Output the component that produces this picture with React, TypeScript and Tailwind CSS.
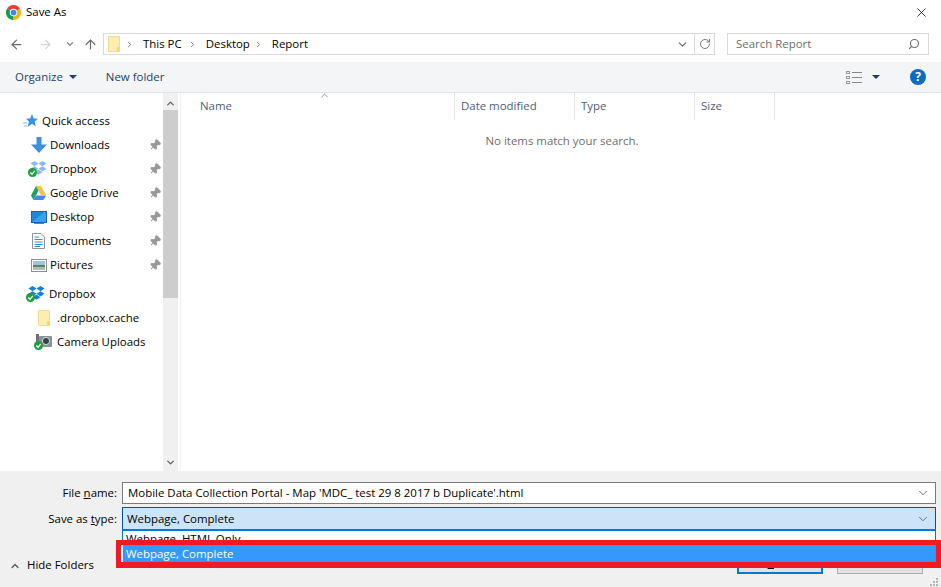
import { ArrowLeft, ArrowRight, ArrowUp, ChevronDown, ChevronRight, ChevronUp, Pin, RotateCw, Search, X } from "lucide-react";

const font = "font-['Open_Sans','Noto_Sans',sans-serif]";

function Chrome() {
  return (
    <svg width="15" height="15" viewBox="0 0 24 24">
      <path d="M12 12 L22.4 6 A12 12 0 0 0 1.6 6 Z" fill="#db4437" />
      <path d="M12 12 L1.6 6 A12 12 0 0 0 12 24 Z" fill="#0f9d58" />
      <path d="M12 12 L12 24 A12 12 0 0 0 22.4 6 Z" fill="#f4b400" />
      <circle cx="12" cy="12" r="6" fill="#fff" />
      <circle cx="12" cy="12" r="4.6" fill="#4285f4" />
    </svg>
  );
}

function Folder() {
  return (
    <svg width="12" height="16" viewBox="0 0 12 16">
      <path d="M0.5 0.5 H11.5 V15.5 H0.5 Z" fill="#fdeeb0" stroke="#efdc9a" />
      <path d="M9 15.5 V11 H11.5 V15.5 Z" fill="#f7d774" />
    </svg>
  );
}

function Check() {
  return (
    <svg className="absolute -left-0.5 bottom-0" width="9" height="9" viewBox="0 0 10 10">
      <circle cx="5" cy="5" r="5" fill="#1f9d3f" />
      <path d="M2.5 5 L4.5 7 L7.5 3.2" fill="none" stroke="#fff" strokeWidth="1.4" />
    </svg>
  );
}

function DropboxIcon({ color }: { color: string }) {
  return (
    <span className="relative block w-[17px] h-[16px]">
      <svg width="17" height="15" viewBox="0 0 17 15">
        <path d="M4.5 0 L8.5 2.6 L4.5 5.2 L0.5 2.6 Z M12.5 0 L16.5 2.6 L12.5 5.2 L8.5 2.6 Z M4.5 5.2 L8.5 7.8 L4.5 10.4 L0.5 7.8 Z M12.5 5.2 L16.5 7.8 L12.5 10.4 L8.5 7.8 Z M8.5 8.6 L12.5 11.2 L8.5 13.8 L4.5 11.2 Z" fill={color} />
      </svg>
      <Check />
    </span>
  );
}

function DownloadIcon() {
  return (
    <svg width="16" height="16" viewBox="0 0 16 16">
      <path d="M5.5 0 H10.5 V7.5 H16 L8 16 L0 7.5 H5.5 Z" fill="#3f8fdc" />
    </svg>
  );
}

function DriveIcon() {
  return (
    <svg width="15" height="14" viewBox="0 0 15 14">
      <path d="M5 0 H10 L15 9 H10 Z" fill="#f7c531" />
      <path d="M5 0 L7.5 4.5 L2.5 14 L0 9.5 Z" fill="#1fa463" />
      <path d="M5 9.5 H15 L12.5 14 H2.5 Z" fill="#4688f4" />
    </svg>
  );
}

function DesktopIcon() {
  return (
    <svg width="16" height="13" viewBox="0 0 16 13">
      <rect x="0.5" y="0.5" width="15" height="11" fill="#1d86e0" stroke="#1465b5" />
      <path d="M1 11 L13 1 H15 V11 Z" fill="#3aa0f0" />
      <rect x="3" y="12" width="10" height="1" fill="#6b7f90" />
    </svg>
  );
}

function DocIcon() {
  return (
    <svg width="13" height="16" viewBox="0 0 13 16">
      <path d="M0.5 0.5 H9 L12.5 4 V15.5 H0.5 Z" fill="#fff" stroke="#8a97a3" />
      <path d="M2.5 4 H7 M2.5 6.5 H10.5 M2.5 9 H10.5 M2.5 11.5 H10.5 M2.5 13.5 H8" stroke="#2f8fd8" strokeWidth="1" />
    </svg>
  );
}

function PictureIcon() {
  return (
    <svg width="16" height="13" viewBox="0 0 16 13">
      <rect x="0.5" y="0.5" width="15" height="12" fill="#fff" stroke="#8a8f94" />
      <rect x="2" y="2" width="12" height="4" fill="#9fc6d8" />
      <rect x="2" y="6" width="12" height="2" fill="#5f7f6e" />
      <rect x="2" y="8" width="12" height="3" fill="#a7c0b5" />
    </svg>
  );
}

function StarIcon() {
  return (
    <svg width="15" height="14" viewBox="0 0 15 14">
      <path d="M9 0 L10.6 4.4 L15 4.7 L11.6 7.6 L12.8 12.5 L9 9.8 L4.6 13 L6 7.6 L3 4.7 L7.2 4.4 Z" fill="#2f93e6" />
      <path d="M0 9 H4 M1 12 H4" stroke="#7fbdea" />
    </svg>
  );
}

function CameraIcon() {
  return (
    <span className="relative block w-[16px] h-[16px]">
      <svg width="16" height="14" viewBox="0 0 16 14">
        <rect x="0" y="0" width="3" height="13" fill="#6a6f73" />
        <rect x="3" y="2" width="13" height="11" rx="1" fill="#8d9296" />
        <circle cx="10" cy="7" r="3.6" fill="#34424c" stroke="#d6dadd" />
      </svg>
      <Check />
    </span>
  );
}

function Grip() {
  return (
    <svg className="absolute right-[3px] bottom-[1px]" width="8" height="8" viewBox="0 0 8 8" fill="#b5b5b5">
      <rect x="6" y="0" width="2" height="2" />
      <rect x="3" y="3" width="2" height="2" />
      <rect x="6" y="3" width="2" height="2" />
      <rect x="0" y="6" width="2" height="2" />
      <rect x="3" y="6" width="2" height="2" />
      <rect x="6" y="6" width="2" height="2" />
    </svg>
  );
}

const quick = [
  { name: "Downloads", icon: <DownloadIcon /> },
  { name: "Dropbox", icon: <DropboxIcon color="#8fb9e6" /> },
  { name: "Google Drive", icon: <DriveIcon /> },
  { name: "Desktop", icon: <DesktopIcon /> },
  { name: "Documents", icon: <DocIcon /> },
  { name: "Pictures", icon: <PictureIcon /> },
];

function NavRow({ icon, name }: { icon: React.ReactNode; name: string }) {
  return (
    <div className="flex items-center h-6 pl-[29px] pr-[2px] text-black">
      <span className="w-[21px] flex justify-center shrink-0 -ml-px mr-px">{icon}</span>
      <span className="flex-1 truncate">{name}</span>
      <Pin size={12} className="text-[#999] fill-[#999] rotate-45" />
    </div>
  );
}

function Column({ label, width }: { label: string; width: string }) {
  return (
    <div className={`${width} h-[26px] flex items-center pl-1.5 border-r border-[#e5e5e5] text-[#4c607a]`}>{label}</div>
  );
}

function Crumb({ label, gap }: { label: string; gap: string }) {
  return (
    <>
      <ChevronRight size={9} strokeWidth={2.5} className={`${gap} text-[#777] shrink-0`} />
      <span className="ml-[9px]">{label}</span>
    </>
  );
}

export default function App() {
  return (
    <div className={`${font} relative w-[941px] h-[587px] overflow-hidden bg-white text-[11.45px] leading-4 text-black flex flex-col`}>
      <header className="h-[24px] shrink-0 flex items-center pl-1.5 pr-[12px]">
        <Chrome />
        <span className="ml-[5px] flex-1">Save As</span>
        <X size={15} strokeWidth={1.2} />
      </header>

      <nav className="h-[38px] shrink-0 flex items-start pt-[9px]">
        <div className="flex items-center h-[22px] pl-[9px] w-[103px] shrink-0">
          <ArrowLeft size={15} strokeWidth={2} className="text-[#6d6d6d]" />
          <ArrowRight size={15} strokeWidth={2} className="text-[#d5d5d5] ml-[14px]" />
          <ChevronDown size={10} strokeWidth={3} className="text-[#8a8a8a] ml-[12px]" />
          <ArrowUp size={15} strokeWidth={2} className="text-[#6d6d6d] ml-[8px]" />
        </div>
        <div className="w-[612px] h-[22px] flex items-center border border-[#d9d9d9] pl-1 shrink-0">
          <Folder />
          <Crumb label="This PC" gap="ml-[5px]" />
          <Crumb label="Desktop" gap="ml-[6px]" />
          <Crumb label="Report" gap="ml-[4px]" />
          <ChevronDown size={13} strokeWidth={2} className="ml-auto mr-[5px] text-[#666]" />
          <span className="w-5 h-full border-l border-[#d9d9d9] flex items-center justify-center">
            <RotateCw size={12} strokeWidth={2} className="text-[#777]" />
          </span>
        </div>
        <div className="ml-3 w-[202px] h-[22px] flex items-center border border-[#d9d9d9] pl-2 pr-2 text-[#6d6d6d] shrink-0">
          <span className="flex-1">Search Report</span>
          <Search size={12} strokeWidth={2.2} className="text-[#6d6d6d] -scale-x-100" />
        </div>
      </nav>

      <div className="h-[31px] shrink-0 bg-[#f4f5f7] border-b border-[#e3e3e3] flex items-center pl-[15px] pr-[15px] text-[#1d3f66]">
        <span>Organize</span>
        <span className="ml-[6px] w-0 h-0 border-x-[4px] border-x-transparent border-t-[4px] border-t-[#1d3f66]" />
        <span className="ml-[29px]">New folder</span>
        <span className="ml-auto grid grid-cols-[4px_10px] gap-x-[2px] gap-y-[2px] w-[17px]">
          {[0, 1, 2].map((i) => (
            <span key={i} className="contents">
              <span className="h-[3px] border border-[#999]" />
              <span className="h-px my-px bg-[#888]" />
            </span>
          ))}
        </span>
        <span className="ml-[9px] w-0 h-0 border-x-[4px] border-x-transparent border-t-[4px] border-t-[#1d3f66]" />
        <span className="ml-[30px] w-4 h-4 rounded-full bg-[#0b6cc0] text-white font-bold text-[12px] flex items-center justify-center">?</span>
      </div>

      <main className="flex-1 flex min-h-0">
        <aside className="w-[163px] shrink-0 pt-[16px] flex flex-col">
          <div className="flex items-center h-6 pl-[23px]">
            <span className="w-[19px] shrink-0"><StarIcon /></span>
            <span>Quick access</span>
          </div>
          {quick.map((q) => (
            <NavRow key={q.name} icon={q.icon} name={q.name} />
          ))}
          <div className="h-[5px]" />
          <div className="flex items-center h-6 pl-[28px]">
            <span className="w-[21px] shrink-0"><DropboxIcon color="#1081de" /></span>
            <span>Dropbox</span>
          </div>
          <div className="flex items-center h-6 pl-[38px]">
            <span className="w-[19px] shrink-0"><Folder /></span>
            <span>.dropbox.cache</span>
          </div>
          <div className="flex items-center h-6 pl-[36px]">
            <span className="w-[21px] shrink-0"><CameraIcon /></span>
            <span>Camera Uploads</span>
          </div>
        </aside>

        <div className="w-[15px] shrink-0 bg-[#f0f0f0] flex flex-col items-center justify-between pt-[5px] pb-[3px] relative">
          <ChevronUp size={11} strokeWidth={3} className="text-[#606060] z-10" />
          <div className="absolute top-[17px] left-0 right-0 h-[188px] bg-[#cdcdcd]" />
          <ChevronDown size={11} strokeWidth={3} className="text-[#606060]" />
        </div>

        <section className="flex-1 relative">
          <div className="flex ml-[2px] pl-px border-l border-[#f0f0f0] h-full items-start">
            <div className="w-[273px] h-[26px] flex items-center pl-[18px] border-r border-[#e5e5e5] text-[#4c607a]">Name</div>
            <Column label="Date modified" width="w-[120px]" />
            <Column label="Type" width="w-[120px]" />
            <Column label="Size" width="w-[80px]" />
          </div>
          <ChevronUp size={11} strokeWidth={1.5} className="absolute left-[141px] -top-[3px] text-[#666]" />
          <p className="absolute top-[40px] inset-x-0 text-center text-[#6d6d6d] pl-[5px]">No items match your search.</p>
        </section>
      </main>

      <footer className="h-[116px] shrink-0 bg-[#f0f0f0] pt-[11px] flex flex-col relative">
        <div className="flex items-center h-[22px]">
          <label className="w-[117px] text-right pr-0">File <u>n</u>ame:</label>
          <div className="ml-[5px] w-[814px] h-[22px] bg-white border border-[#7a7a7a] flex items-center pl-[5px] pr-[5px]">
            <span className="flex-1 truncate">Mobile Data Collection Portal - Map 'MDC_ test 29 8 2017 b Duplicate'.html</span>
            <ChevronDown size={14} strokeWidth={1.4} className="text-[#555]" />
          </div>
        </div>
        <div className="flex items-center h-[23px] mt-[3px]">
          <label className="w-[117px] text-right">Save as <u>t</u>ype:</label>
          <div className="ml-[5px] w-[814px] h-[23px] bg-[#cce4f7] border border-[#005499] flex items-center pl-[4px] pr-[5px]">
            <span className="flex-1">Webpage, Complete</span>
            <ChevronDown size={14} strokeWidth={1.4} className="text-[#555]" />
          </div>
        </div>
        <div className="flex-1 flex items-end pb-[13px] pl-[9px] pr-[18px]">
          <ChevronUp size={12} strokeWidth={2.5} className="text-[#555] mb-[2px]" />
          <span className="ml-[6px] flex-1 mb-px">Hide Folders</span>
          <button className="w-[86px] h-[22px] bg-[#e1e1e1] border-2 border-[#0078d7] text-center"><u>S</u>ave</button>
          <button className="ml-[14px] w-[86px] h-[22px] bg-[#e1e1e1] border border-[#adadad] text-center">Cancel</button>
        </div>
        <Grip />

        <div className="absolute left-[122px] top-[58px] w-[814px] h-[34px] bg-white border-x border-t-2 border-t-[#0078d7] border-x-[#0078d7] pl-[3px] leading-[15px]">
          Webpage, HTML Only
        </div>
        <div className="absolute left-[116px] top-[69px] w-[825px] h-[28px] border-x-[5px] border-t-[5px] border-b-[6px] border-[#ed1c24] bg-white pl-[2px]">
          <div className="h-full bg-[#3399ff] text-white border border-dotted border-[#8a7f60] pl-[2px] leading-[15px]">Webpage, Complete</div>
        </div>
      </footer>
    </div>
  );
}
